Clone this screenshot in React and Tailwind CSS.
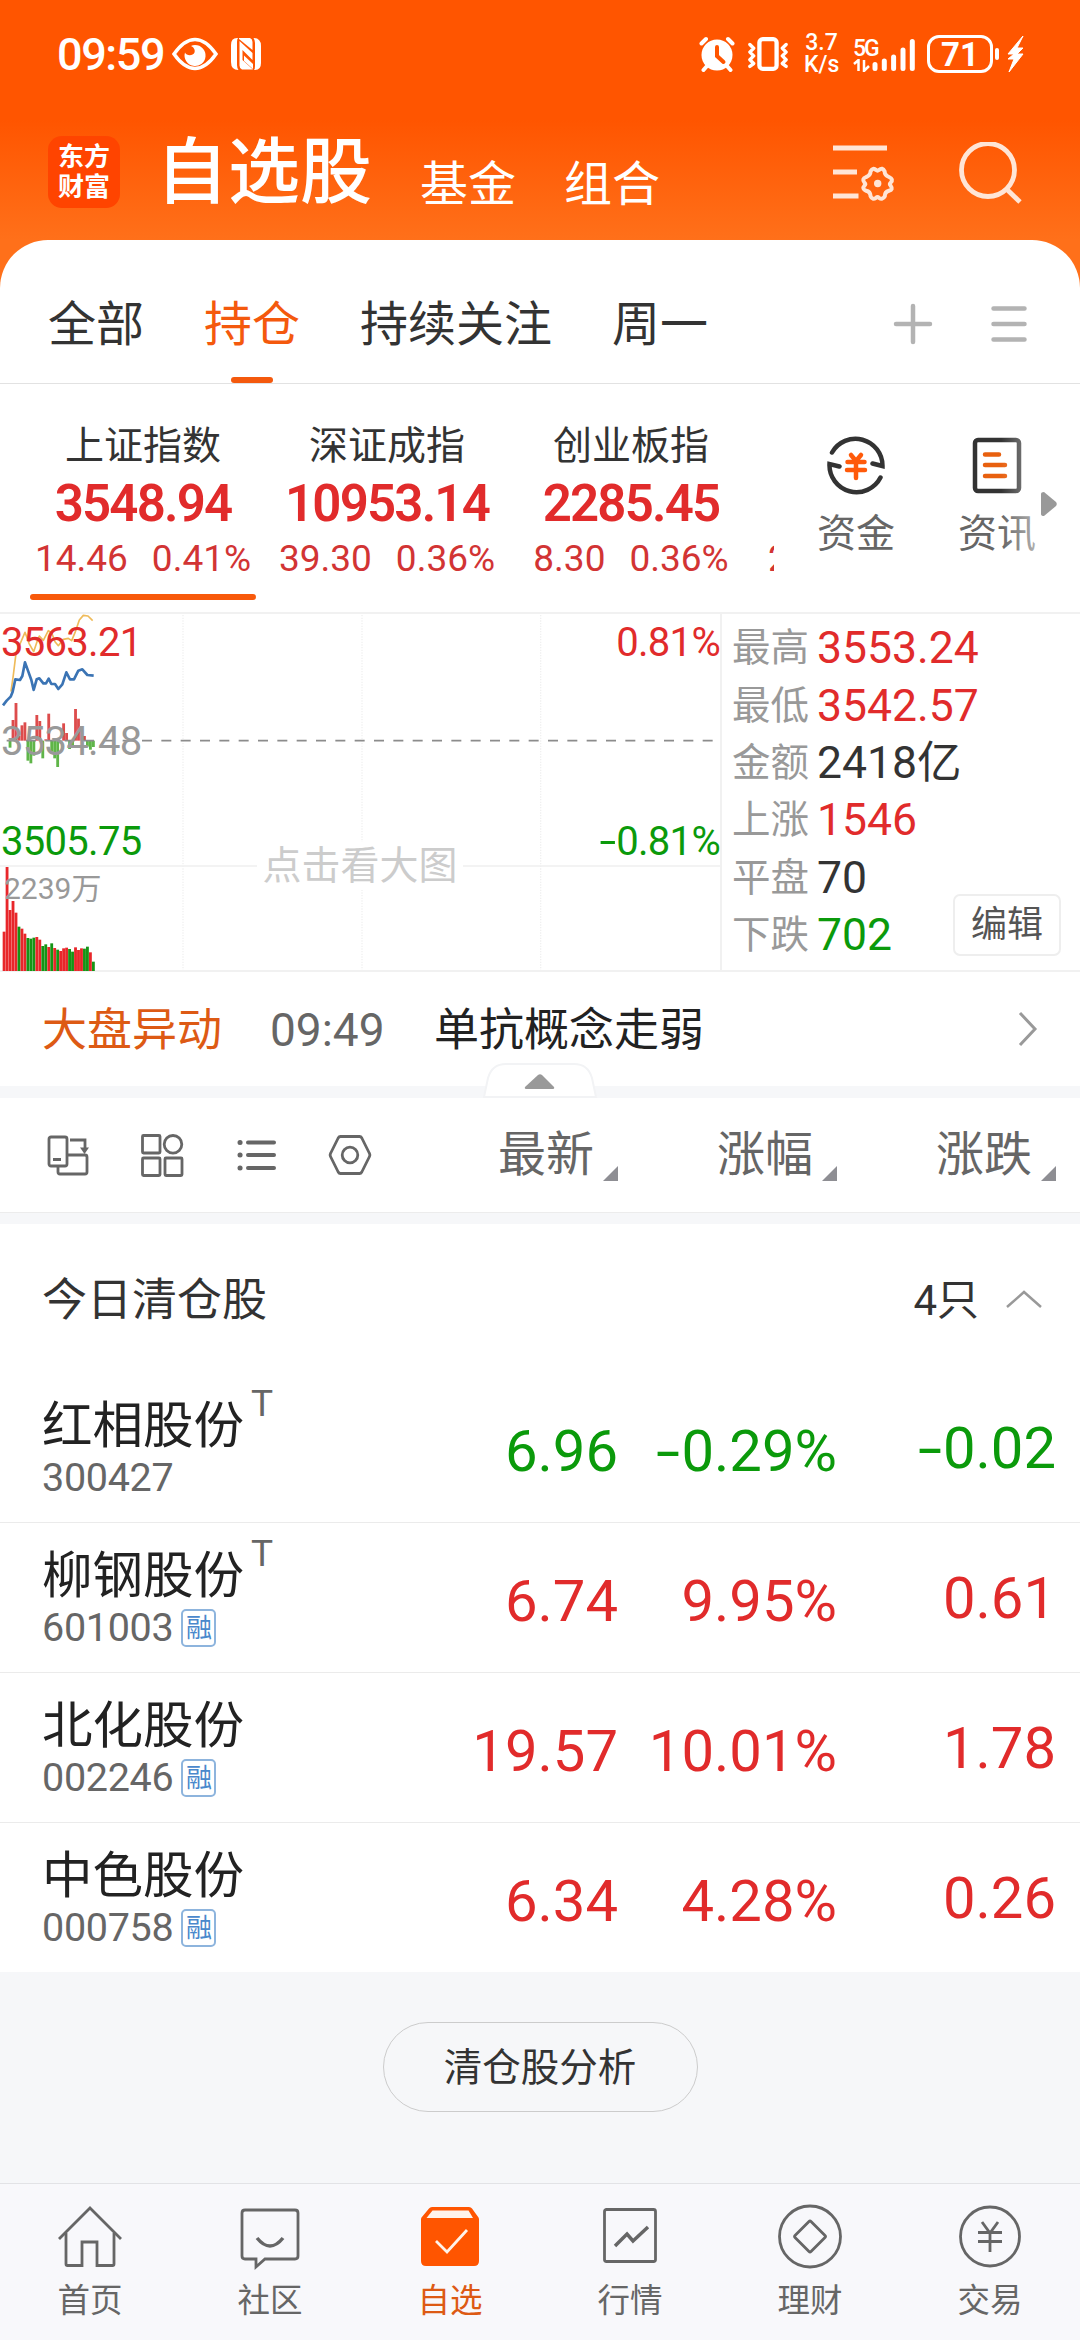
import clsx from "clsx";

const RED = "text-[#e12b2b]";
const GREEN = "text-[#0b9a0b]";

const indexes = [
  { name: "上证指数", value: "3548.94", diff: "14.46", pct: "0.41%", active: true },
  { name: "深证成指", value: "10953.14", diff: "39.30", pct: "0.36%" },
  { name: "创业板指", value: "2285.45", diff: "8.30", pct: "0.36%" },
];

const stats = [
  { label: "最高", value: "3553.24", color: RED },
  { label: "最低", value: "3542.57", color: RED },
  { label: "金额", value: "2418亿", color: "text-[#333]" },
  { label: "上涨", value: "1546", color: RED },
  { label: "平盘", value: "70", color: "text-[#333]" },
  { label: "下跌", value: "702", color: GREEN },
];

const stocks = [
  { name: "红相股份", code: "300427", t: true, price: "6.96", pct: "-0.29%", diff: "-0.02", color: GREEN },
  { name: "柳钢股份", code: "601003", t: true, margin: true, price: "6.74", pct: "9.95%", diff: "0.61", color: RED },
  { name: "北化股份", code: "002246", margin: true, price: "19.57", pct: "10.01%", diff: "1.78", color: RED },
  { name: "中色股份", code: "000758", margin: true, price: "6.34", pct: "4.28%", diff: "0.26", color: RED },
];

// bar tops, chart units (3 per pixel)
const volume = [
  995, 801, 930, 903, 938, 980, 986, 1001, 1014, 1016, 1013, 1011, 1019, 1038,
  1033, 1041, 1030, 1044, 1049, 1053, 1045, 1043, 1047, 1055, 1042, 1050, 1045,
  1046, 1040, 1057, 1085,
];
const volumeColors = "rrrrrgrrgggrrggrgrgrrrggrrrggrg";
const momentum = [
  422, 422, 443, 360, 309, 408, 376, 367, 482, 490, 467, 345, 363, 475, 418,
  341, 455, 475, 501, 430, 370, 399, 447, 438, 327, 356, 382, 408, 440, 449,
  441,
];

// negative numbers get a wider minus sign
const Num = ({ children }) =>
  children.startsWith("-") ? (
    <>
      <span className="mx-[0.09em] inline-block scale-x-150">-</span>
      {children.slice(1)}
    </>
  ) : (
    children
  );

const StatusBar = () => (
  <div className="flex h-[108px] items-center pl-[57px] pr-[55px] text-white">
    <div className="w-[107px] whitespace-nowrap text-[45px] font-medium leading-none tracking-[-1.4px]">09:59</div>
    <svg className="ml-[8px]" width="46" height="34" viewBox="0 0 46 34" fill="none">
      <path d="M2 17C9 7 15 2.500 23 2.500S37 7 44 17C37 27 31 31.500 23 31.500S9 27 2 17Z" stroke="#fff" strokeWidth="3.500" />
      <path d="M23 8a10.500 10.500 0 1 1-10 7.500c1.500 3.500 8 3.500 9.500 0C23.500 13 21.500 10 19 9c1.200-.7 2.500-1 4-1Z" fill="#fff" />
    </svg>
    <svg className="ml-[12px]" width="32" height="34" viewBox="0 0 32 34" fill="#fff">
      <path d="M8 1H7Q1 1 1 8v17q0 8 7.500 8Q7 31 7 28V5Q7 2 8 1Z" />
      <path d="M24 33h1q6 0 6-7V9q0-8-7.500-8Q25 3 25 6v23q0 3-1 4Z" />
      <path d="M9 1h11q2.500 1 2.500 4v8L9 2Z" />
      <path d="M9.500 4 22.500 16v7L12.500 13v10L23 32.500H12q-2.500-1-2.500-4Z" />
      <path d="M14 18.500 23 27v5L14 24Z" />
    </svg>
    <div className="ml-auto flex items-center">
      <svg width="36" height="36" viewBox="0 0 36 36" fill="none" stroke="#fff" strokeWidth="4" strokeLinecap="round">
        <circle cx="18" cy="19" r="15.500" fill="#fff" stroke="none" />
        <path d="M2.500 7.500 7 3M33.500 7.500 29 3M8 30l-3.500 4M28 30l3.500 4" />
        <path d="M18 11v9l6.500 6" stroke="#ff5500" strokeWidth="4" />
      </svg>
      <svg className="ml-[12px]" width="42" height="36" viewBox="0 0 44 36" fill="none" stroke="#fff" strokeWidth="3.800" strokeLinecap="round" strokeLinejoin="round">
        <rect x="13" y="2.500" width="18" height="31" rx="3.500" strokeWidth="4.500" />
        <path d="M3 8l4 4-4 4 4 4-4 4 4 4-4 3M41 8l-4 4 4 4-4 4 4 4-4 4 4 3" strokeWidth="3.500" />
      </svg>
      <div className="ml-[15px] w-[35px] text-center text-[23px] font-medium leading-[22px]">
        <div>3.7</div>
        <div>K/s</div>
      </div>
      <div className="ml-[14px] flex items-end">
        <div className="w-[24px]">
          <div className="text-[23px] font-medium leading-[20px] tracking-[-2px]">5G</div>
          <svg width="17" height="13" viewBox="0 0 17 13" fill="none" stroke="#fff" strokeWidth="2.500">
            <path d="M1 5l4.500-4v11M11 1v11l5-5" />
          </svg>
        </div>
        <svg className="-ml-[5px]" width="44" height="36" viewBox="0 0 44 36" stroke="#fff" strokeWidth="5" strokeLinecap="round">
          <path d="M3 28.500v4M12.300 25v7.500M21.600 21v11.500M31 14v18.500M40.300 5.500v27" />
        </svg>
      </div>
      <div className="ml-[11px] flex h-[38px] w-[66px] items-center justify-center rounded-[12px] border-[3px] border-white text-[33px] font-bold leading-none">
        71
      </div>
      <div className="ml-[2px] h-[12px] w-[4px] rounded-full bg-white" />
      <svg className="ml-[7px]" width="19" height="38" viewBox="0 0 17 38" fill="#fff" stroke="#fff" strokeWidth="1">
        <path d="M16 1 1 19h6L1 24h6L2 37l14-18h-6L16 13h-6Z" />
      </svg>
    </div>
  </div>
);

const Header = () => (
  <div className="flex h-[132px] pl-[48px]">
    <div className="mt-[28px] flex h-[72px] w-[72px] flex-col items-center justify-center rounded-[14px] bg-[#ff4400] text-[26px] font-bold leading-[30px] text-white">
      <div>东方</div>
      <div>财富</div>
    </div>
    <div className="ml-[36px] mt-[29px] text-[72px] font-medium leading-[72px] text-white">自选股</div>
    <div className="ml-[48px] mt-[53px] text-[48px] leading-[48px] text-white">基金</div>
    <div className="ml-[48px] mt-[53px] text-[48px] leading-[48px] text-white">组合</div>
    <svg className="ml-auto mt-[34px]" width="66" height="62" viewBox="0 0 66 62" fill="none" stroke="#ffe5d6" strokeWidth="4.800">
      <path d="M1 6h54M1 30h24M1 54h25.500" />
      <path d="M40.600 29.300q2.500-4.300 5.400-1.300 1.500 1.200 3 0 3.500-3.200 5.600 1.300 0 4 4.400 5.700 5 2.200 1.600 5.600-1.600 1.500 0 3 3 4-1.600 5.200-4.200 1-4.200 5.400-2.300 4-5.800 1.600-1.500-1.300-3 0-3.600 2.600-5.400-1.600-.3-4.600-4.400-5.400-4.700-2-1.700-5.200 1.500-1.500 0-3-3.200-3.600 1.700-5.600 4.300-1.500 4.400-5.700Z" transform="translate(-2 0)" strokeWidth="4" />
      <circle cx="45.700" cy="41.500" r="3.700" fill="#ffe5d6" stroke="none" />
    </svg>
    <svg className="ml-[61px] mr-[55px] mt-[34px]" width="66" height="64" viewBox="0 0 66 64" fill="none" stroke="#ffe5d6" strokeWidth="4.800">
      <circle cx="29" cy="28" r="26.500" />
      <path d="M47.500 47 61 60" />
    </svg>
  </div>
);

const Tabs = () => (
  <div className="flex h-[144px] items-center rounded-t-[48px] border-b border-[#e2e2e2] bg-white pl-[48px] text-[48px] leading-none text-[#333]">
    <div className="mt-[26px]">全部</div>
    <div className="relative ml-[60px] mt-[26px] text-[#f4590d]">
      持仓
      <div className="absolute left-[27px] top-[76px] h-[6px] w-[42px] rounded-full bg-[#f4590d]" />
    </div>
    <div className="ml-[60px] mt-[26px]">持续关注</div>
    <div className="ml-[60px] mt-[26px]">周一</div>
    <svg className="ml-auto mt-[24px]" width="40" height="42" viewBox="0 0 40 42" stroke="#b3b3b3" strokeWidth="4.500" strokeLinecap="round">
      <path d="M20 3v36M3 21h34" />
    </svg>
    <svg className="ml-[58px] mr-[53px] mt-[24px]" width="36" height="40" viewBox="0 0 36 40" stroke="#b3b3b3" strokeWidth="4.500" strokeLinecap="round">
      <path d="M2.500 4.500h31M2.500 20h31M2.500 35.500h31" />
    </svg>
  </div>
);

const IndexStrip = () => (
  <div className="flex h-[228px] bg-white">
    <div className="flex w-[774px] overflow-hidden pl-[21px]">
      {indexes.map((item) => (
        <div key={item.name} className="flex w-[244px] shrink-0 flex-col items-center pt-[42px]">
          <div className="text-[39px] leading-[40px] text-[#333]">{item.name}</div>
          <div className={clsx("mt-[12px] text-[51px] font-semibold leading-[52px] tracking-[-1.8px]", RED)}>{item.value}</div>
          <div className="mt-[10px] flex gap-[24px] text-[37px] leading-[38px] text-[#d23434]">
            <span>{item.diff}</span>
            <span>{item.pct}</span>
          </div>
          {item.active && <div className="mt-[16px] h-[6px] w-[226px] rounded-full bg-[#f8590b]" />}
        </div>
      ))}
      <div className="shrink-0 pl-[15px] pt-[156px] text-[37px] leading-[38px] text-[#d23434]">2</div>
    </div>
    <div className="ml-[42px] flex w-[80px] flex-col items-center pt-[50px]">
      <svg width="64" height="62" viewBox="0 0 64 62" fill="none" stroke="#333" strokeWidth="4.500" strokeLinecap="round">
        <path d="M8 18.500A27 27 0 0 1 58.500 32l-10-2.500M56.500 43.500A27 27 0 0 1 5.500 30l10 2.500" />
        <path d="M27 21l5 6 5-6M23.500 28h17M23 36h18M32 28v16" stroke="#ff5a0a" />
      </svg>
      <div className="mt-[18px] text-[39px] leading-[40px] text-[#666]">资金</div>
    </div>
    <div className="relative ml-[61px] flex w-[80px] flex-col items-center pt-[50px]">
      <svg width="50" height="62" viewBox="0 0 50 62" fill="none" stroke="#333" strokeWidth="4.500" strokeLinecap="round">
        <rect x="3" y="6" width="44" height="51" rx="3" />
        <path d="M13 20.500h14M13 31h20M13 42h20" stroke="#e8600f" />
      </svg>
      <div className="mt-[18px] text-[39px] leading-[40px] text-[#666]">资讯</div>
      <div className="absolute right-0 top-[50px] h-[130px] w-[36px] bg-gradient-to-r from-white/0 to-white/50" />
    </div>
    <svg className="ml-[4px] mt-[107px]" width="16" height="26" viewBox="0 0 16 26" fill="#999">
      <path d="M0 3Q0 1 3 1l12 10q1.500 2 0 4L3 25Q0 25 0 23Z" />
    </svg>
  </div>
);

const Chart = () => (
  <div className="relative h-[360px] w-[720px] text-[40px] leading-[40px] tracking-[-0.7px]">
    <svg className="absolute inset-0" width="720" height="360" viewBox="0 36 2160 1080" fill="none">
      <path d="M549 45V1110M1086 45V1110M1622 45V1110" stroke="#f0f0f0" strokeWidth="4" strokeDasharray="4 4" />
      <path d="M0 798H2160" stroke="#efefef" strokeWidth="5" />
      {volume.map((y, i) => (
        <rect key={i} x={8 + i * 8.93} y={y} width="8.500" height={1113 - y} fill={volumeColors[i] === "r" ? "#e8262a" : "#159415"} />
      ))}
      {momentum.map((y, i) => (
        <rect key={i} x={8 + i * 8.93} y={Math.min(y, 422)} width="8.500" height={Math.abs(y - 422)} fill={y < 422 ? "#dd4c4c" : "#5fb548"} />
      ))}
      <path d="M0 422H2160" stroke="#8c8c8c" strokeWidth="5" strokeDasharray="30 28" strokeDashoffset="38" />
      <path
        d="M33 275 40 225 48 160 60 132 75 97 87 130 101 155 110 128 118 108 130 121 145 92 155 98 165 125 175 137 190 118 205 115 215 122 225 98 238 60 250 46 264 48 278 62"
        stroke="#efbb5a"
        strokeWidth="5"
        strokeLinejoin="round"
      />
      <path
        d="M9 316 20 302 32 290 38 275 46 238 60 240 67 228 75 187 85 215 94 240 101 270 110 238 118 235 130 250 138 250 146 236 154 252 165 252 175 267 187 253 199 217 210 238 222 238 235 212 247 208 262 225 281 227"
        stroke="#3b74b4"
        strokeWidth="8"
        strokeLinejoin="round"
      />
    </svg>
    <div className={clsx("absolute left-[1px] top-[11px]", RED)}>3563.21</div>
    <div className="absolute left-[1px] top-[110px] text-[#999]">3534.48</div>
    <div className={clsx("absolute left-[1px] top-[210px]", GREEN)}>3505.75</div>
    <div className={clsx("absolute right-0 top-[11px]", RED)}>0.81%</div>
    <div className={clsx("absolute right-0 top-[210px]", GREEN)}>
      <Num>-0.81%</Num>
    </div>
    <div className="absolute left-[4px] top-[262px] text-[30px] leading-[30px] tracking-normal text-[#999]">2239万</div>
    <div className="absolute left-[257px] top-[230px] w-[206px] bg-white text-center text-[39px] leading-[48px] tracking-normal text-[#ccc]">
      点击看大图
    </div>
  </div>
);

const MarketPanel = () => (
  <div className="flex h-[360px] border-y-2 border-[#f1f1f1] bg-white">
    <div className="-mt-[2px] w-[720px] shrink-0">
      <Chart />
    </div>
    <div className="flex flex-1 border-l-2 border-[#f1f1f1]">
      <div className="flex w-[212px] shrink-0 flex-col whitespace-nowrap pl-[10px] pt-[6px]">
        {stats.map((s) => (
          <div key={s.label} className="flex h-[57.300px] items-center leading-none">
            <span className="text-[38.500px] text-[#999]">{s.label}</span>
            <span className={clsx("ml-[8px] text-[44.500px]", s.color)}>{s.value}</span>
          </div>
        ))}
      </div>
      <div className="mb-[14px] ml-[19px] flex h-[62px] w-[108px] shrink-0 items-center justify-center self-end rounded-[7px] border-2 border-[#eee] text-[36px] leading-none text-[#555]">
        编辑
      </div>
    </div>
  </div>
);

const NewsRow = () => (
  <div className="relative flex h-[114px] items-center bg-white pl-[42px] pr-[41px] text-[45px] leading-none">
    <span className="pt-[2px] text-[#dd5a14]">大盘异动</span>
    <span className="ml-[48px] w-[117px] pt-[2px] text-[46px] text-[#666]">09:49</span>
    <span className="ml-[47px] pt-[2px] text-[#222]">单抗概念走弱</span>
    <svg className="ml-auto" width="22" height="36" viewBox="0 0 22 36" fill="none" stroke="#999" strokeWidth="3">
      <path d="M3 2l15 16L3 34" />
    </svg>
    <svg className="absolute left-[482px] top-[90px] z-10" width="116" height="38" viewBox="0 0 116 38">
      <path d="M2 35 6 16Q10 2 24 2H92Q106 2 110 16L114 35Z" fill="#fff" stroke="#f2f3f5" strokeWidth="2" />
      <path d="M43 25 56 13q2-1.500 4 0L72 25q1 2-2 2H45q-3 0-2-2Z" fill="#999" />
    </svg>
  </div>
);

const SortLabel = ({ children }) => (
  <div className="flex w-[219px] items-center justify-end">
    <span className="text-[48px] leading-none text-[#666]">{children}</span>
    <svg className="ml-[9px] mt-[36px]" width="15" height="15" viewBox="0 0 15 15" fill="#8e8e93">
      <path d="M15 0v15H0Z" />
    </svg>
  </div>
);

const Toolbar = () => (
  <div className="flex h-[115px] items-center border-b border-[#ececec] bg-white pr-[24px]">
    <div className="flex items-center pl-[45px]">
      <svg width="46" height="46" viewBox="0 0 46 46" fill="none" stroke="#666" strokeWidth="2.800">
        <rect x="4" y="5" width="18" height="29" rx="2" />
        <path d="M8 27.500h8M13 34v6q0 2 2 2h25q2 0 2-2V25q0-2-2-2H22M25 8h15v10" />
        <path d="M35 15.500h9L39.500 22Z" fill="#666" stroke="none" />
      </svg>
      <svg className="ml-[48px]" width="46" height="46" viewBox="0 0 46 46" fill="none" stroke="#666" strokeWidth="2.800">
        <rect x="3.500" y="3.500" width="17.500" height="17.500" rx="1" />
        <circle cx="34" cy="12.300" r="8.800" />
        <rect x="3.500" y="26" width="17.500" height="17.500" rx="1" />
        <rect x="26" y="26" width="17" height="17.500" rx="1" />
      </svg>
      <svg className="ml-[48px]" width="46" height="46" viewBox="0 0 46 46" fill="none" stroke="#666" strokeWidth="4" strokeLinecap="round">
        <path d="M15 10.500h26M15 23h26M15 36h26" />
        <path d="M7 10.500h.1M7 23h.1M7 36h.1" strokeWidth="5" />
      </svg>
      <svg className="ml-[48px]" width="46" height="46" viewBox="0 0 46 46" fill="none" stroke="#666" strokeWidth="2.800" strokeLinejoin="round">
        <path d="M13.500 4.500h19q1.500 0 2.300 1.500L42.500 21.500q.8 1.500 0 3L34.800 40q-.8 1.500-2.300 1.500h-19q-1.500 0-2.300-1.500L3.500 24.500q-.8-1.500 0-3L11.200 6q.8-1.500 2.300-1.500Z" />
        <circle cx="23" cy="23" r="7.800" />
      </svg>
    </div>
    <div className="ml-auto flex">
      <SortLabel>最新</SortLabel>
      <SortLabel>涨幅</SortLabel>
      <SortLabel>涨跌</SortLabel>
    </div>
  </div>
);

const StockRow = ({ stock }) => (
  <div className="flex h-[150px] border-b border-[#ebebeb] pl-[42px] pr-[24px] last:border-b-0">
    <div className="pt-[26px]">
      <div className="flex h-[52px]">
        <div className="text-[50.500px] leading-[54px] text-[#222]">{stock.name}</div>
        {stock.t && <div className="-mt-[15px] ml-[7px] text-[37px] leading-[40px] text-[#666]">T</div>}
      </div>
      <div className="mt-[6px] flex h-[42px] items-center">
        <span className="text-[39.500px] leading-none tracking-[-0.3px] text-[#666]">{stock.code}</span>
        {stock.margin && (
          <span className="ml-[8px] flex h-[38px] w-[35px] items-center justify-center rounded-[5px] border-2 border-[#8db4dd] text-[26px] leading-none text-[#4a88cc]">
            融
          </span>
        )}
      </div>
    </div>
    <div className={clsx("ml-auto flex pt-[48px] text-[58px] leading-[60px]", stock.color)}>
      <div className="w-[219px] text-right">{stock.price}</div>
      <div className="w-[219px] text-right">
        <Num>{stock.pct}</Num>
      </div>
      <div className="-mt-[3px] w-[219px] text-right">
        <Num>{stock.diff}</Num>
      </div>
    </div>
  </div>
);

const StockList = () => (
  <div className="h-[748px] bg-white">
    <div className="flex h-[149px] items-center pl-[42px] pr-[36px] text-[45px] leading-none text-[#333]">
      <span className="mt-[4px]">今日清仓股</span>
      <span className="ml-auto mt-[4px] text-[42px]">4只</span>
      <svg className="ml-[25px]" width="40" height="22" viewBox="0 0 40 22" fill="none" stroke="#999" strokeWidth="2.500">
        <path d="M3 19 20 4l17 15" />
      </svg>
    </div>
    {stocks.map((s) => (
      <StockRow key={s.code} stock={s} />
    ))}
  </div>
);

const navItems = [
  {
    label: "首页",
    icon: (
      <>
        <path d="M4 36 35 5l31 31" />
        <path d="M11 30v31q0 1.500 1.500 1.500H27V39h15v23.500h15.500q1.500 0 1.500-1.500V30" />
      </>
    ),
  },
  {
    label: "社区",
    icon: (
      <>
        <path d="M10 7h50q3 0 3 3v43q0 3-3 3H30l-9 8V56H10q-3 0-3-3V10q0-3 3-3Z" />
        <path d="M22 35q13 16 26 0" strokeWidth="3.500" />
      </>
    ),
  },
  {
    label: "自选",
    active: true,
    icon: (
      <>
        <path d="M17 4h37q2 0 3 1.500l6.500 9q.5 1 .5 2V58q0 5-5 5H11q-5 0-5-5V16.500q0-1 .5-2l7.500-9Q15 4 17 4Z" fill="#ff5500" stroke="none" />
        <path d="M17.500 7.500h36l4.500 7.500H11.500Z" fill="#fff3ea" stroke="none" />
        <path d="M21 38l11 11 20-22" stroke="#fff3ea" />
      </>
    ),
  },
  {
    label: "行情",
    icon: (
      <>
        <rect x="9.500" y="6.500" width="51" height="52" rx="2" />
        <path d="M20 43l12-12 6 7 15-14" strokeWidth="3.500" />
      </>
    ),
  },
  {
    label: "理财",
    icon: (
      <>
        <circle cx="35" cy="33.500" r="30.500" />
        <path d="M34 18.500q1-1 2 0l14 14q1 1 0 2l-14 14q-1 1-2 0l-14-14q-1-1 0-2Z" />
      </>
    ),
  },
  {
    label: "交易",
    icon: (
      <>
        <circle cx="35" cy="33.500" r="29.500" />
        <path d="M27 19l8 11 8-11M23 29.500h24M23 38.500h24M35 29v20" />
      </>
    ),
  },
];

const BottomNav = () => (
  <div className="flex h-[157px] border-t border-[#e2e3e6] bg-[#f8f8fb]">
    {navItems.map((item) => (
      <div key={item.label} className="flex w-[180px] flex-col items-center pt-[19px]">
        <svg width="70" height="70" viewBox="0 0 70 70" fill="none" stroke="#666" strokeWidth="2.800">
          {item.icon}
        </svg>
        <div className={clsx("mt-[10px] text-[32.500px] leading-[36px]", item.active ? "text-[#dd5a14]" : "text-[#666]")}>
          {item.label}
        </div>
      </div>
    ))}
  </div>
);

export default function App() {
  return (
    <div className="flex h-[2340px] w-[1080px] flex-col overflow-hidden bg-[#f6f7f9] font-['Roboto','Noto_Sans_CJK_SC',sans-serif]">
      <div className="bg-[linear-gradient(#ff5500_120px,#ff701a_240px)]">
        <StatusBar />
        <Header />
        <Tabs />
      </div>
      <IndexStrip />
      <MarketPanel />
      <NewsRow />
      <div className="h-[12px] shrink-0" />
      <Toolbar />
      <div className="h-[11px] shrink-0" />
      <StockList />
      <div className="flex flex-1 justify-center pt-[50px]">
        <div className="flex h-[90px] w-[315px] items-center justify-center rounded-full border border-[#ccc] pt-[2px] text-[38.500px] leading-none text-[#333]">
          清仓股分析
        </div>
      </div>
      <BottomNav />
    </div>
  );
}
